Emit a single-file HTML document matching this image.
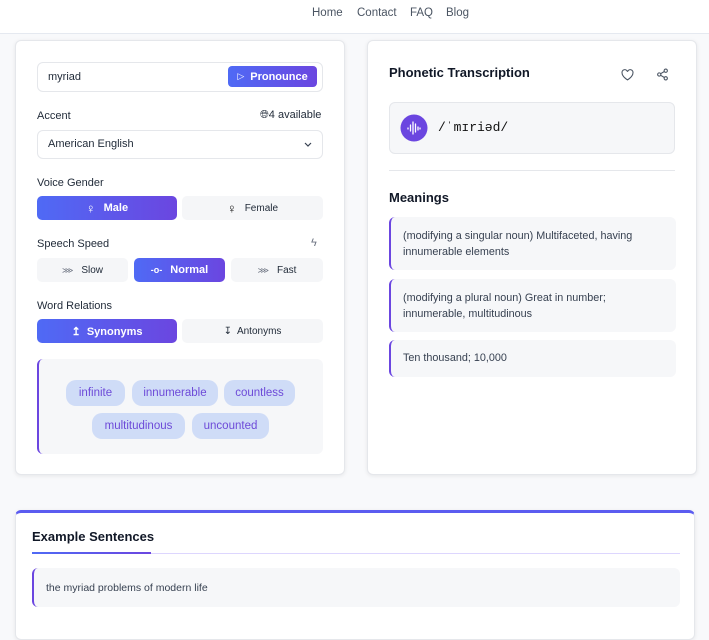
<!DOCTYPE html>
<html><head><meta charset="utf-8"><style>
*{box-sizing:border-box;margin:0;padding:0}
body{width:709px;height:621px;overflow:hidden;background:#f8f9fb;font-family:"Liberation Sans",sans-serif;color:#1f2937;position:relative}
.abs{position:absolute}
.hdr{left:0;top:0;width:709px;height:34px;background:#fff;border-bottom:1px solid #e5e9f0}
.nav{top:7px;font-size:11.5px;color:#4b5563}
.card{background:#fff;border:1px solid #e5e7eb;border-radius:6px;box-shadow:0 1px 4px rgba(0,0,0,.08)}
.lbl{font-size:11px;color:#1f2937}
.grad{background:linear-gradient(90deg,#4f6af5,#6b46e0);color:#fff}
.btn{border-radius:5px;font-size:10px;display:flex;align-items:center;justify-content:center;gap:8px}
.btn.off{background:#f5f6f8;color:#1f2937}
.btn.on{font-weight:bold;font-size:11px}
.chip{background:#cfdcf7;color:#6d4ad8;border-radius:10px;font-size:11.5px;display:flex;align-items:center;justify-content:center;height:26px}
.mean{background:#f6f7f9;border-left:2px solid #6b46e0;border-radius:6px;font-size:10.8px;line-height:16px;padding:11px 24px 11px 12px;color:#374151}
</style></head><body>
<div class="abs hdr"></div>
<div class="abs nav" style="left:312px">Home</div>
<div class="abs nav" style="left:357px">Contact</div>
<div class="abs nav" style="left:410px">FAQ</div>
<div class="abs nav" style="left:446px">Blog</div>

<div class="abs card" style="left:15px;top:40px;width:330px;height:435px"></div>
<div class="abs" style="left:37px;top:62px;width:286px;height:30px;border:1px solid #e5e7eb;border-radius:6px"></div>
<div class="abs" style="left:48px;top:71px;font-size:11px">myriad</div>
<div class="abs btn grad" style="left:228px;top:66px;width:89px;height:21px;border-radius:4px;font-size:11px;font-weight:bold;gap:6px"><span style="font-size:9px;font-weight:normal">▷</span>Pronounce</div>
<div class="abs lbl" style="left:37px;top:110px">Accent</div>
<div class="abs lbl" style="left:260px;top:109px">🌐︎4 available</div>
<div class="abs" style="left:37px;top:130px;width:286px;height:29px;border:1px solid #e5e7eb;border-radius:6px"></div>
<div class="abs" style="left:48px;top:138px;font-size:11px">American English</div>
<svg class="abs" style="left:304px;top:140px" width="8" height="8"><path d="M1 3l3 3 3-3" fill="none" stroke="#374151" stroke-width="1.2"/></svg>
<div class="abs lbl" style="left:37px;top:177px">Voice Gender</div>
<div class="abs btn grad on" style="left:37px;top:196px;width:140px;height:24px"><span style="font-size:13px;font-weight:normal">♀</span> Male</div>
<div class="abs btn off" style="left:182px;top:196px;width:141px;height:24px"><span style="font-size:13px;font-weight:bold;color:#111">♀</span> Female</div>
<div class="abs lbl" style="left:37px;top:238px">Speech Speed</div>
<div class="abs" style="left:311px;top:237px;font-size:11px;color:#6b7280">ϟ</div>
<div class="abs btn off" style="left:37px;top:258px;width:91px;height:24px"><span style="color:#6b7280;font-size:8px">⋙</span>Slow</div>
<div class="abs btn grad on" style="left:134px;top:258px;width:91px;height:24px"><span style="font-size:9px">-o-</span>Normal</div>
<div class="abs btn off" style="left:231px;top:258px;width:92px;height:24px"><span style="color:#6b7280;font-size:8px">⋙</span>Fast</div>
<div class="abs lbl" style="left:37px;top:300px">Word Relations</div>
<div class="abs btn grad on" style="left:37px;top:319px;width:140px;height:24px">↥&nbsp; Synonyms</div>
<div class="abs btn off" style="left:182px;top:319px;width:141px;height:24px">↧&nbsp; Antonyms</div>
<div class="abs" style="left:37px;top:359px;width:286px;height:95px;background:#f6f7f9;border-left:2px solid #6b46e0;border-radius:6px"></div>
<div class="abs chip" style="left:66px;top:380px;width:59px">infinite</div>
<div class="abs chip" style="left:132px;top:380px;width:86px">innumerable</div>
<div class="abs chip" style="left:224px;top:380px;width:71px">countless</div>
<div class="abs chip" style="left:92px;top:413px;width:93px">multitudinous</div>
<div class="abs chip" style="left:192px;top:413px;width:77px">uncounted</div>

<div class="abs card" style="left:367px;top:40px;width:330px;height:435px"></div>
<div class="abs" style="left:389px;top:65px;font-size:13px;font-weight:bold;color:#111827">Phonetic Transcription</div>
<svg class="abs" style="left:621px;top:69px" width="13" height="12" viewBox="0 0 24 22"><path d="M12 20S2 14 2 7.5A5 5 0 0 1 12 5a5 5 0 0 1 10 2.5C22 14 12 20 12 20z" fill="none" stroke="#4b5563" stroke-width="2"/></svg>
<svg class="abs" style="left:656px;top:68px" width="13" height="13" viewBox="0 0 24 24" fill="none" stroke="#4b5563" stroke-width="2"><circle cx="18" cy="5" r="3"/><circle cx="6" cy="12" r="3"/><circle cx="18" cy="19" r="3"/><path d="M8.6 13.5l6.8 4M15.4 6.5l-6.8 4"/></svg>
<div class="abs" style="left:389px;top:102px;width:286px;height:52px;background:#f6f7f9;border:1px solid #e5e7eb;border-radius:6px"></div>
<svg class="abs" style="left:400px;top:114px" width="28" height="28"><circle cx="14" cy="14" r="13.5" fill="#6b46e0"/><path d="M8 14v1M10.5 11v6M13 8v12M15.5 10v8M18 13v3M20 14v1" stroke="#fff" stroke-width="1.3" stroke-linecap="round"/></svg>
<div class="abs" style="left:438px;top:120px;font-family:'Liberation Mono','DejaVu Sans Mono',monospace;font-size:13px;color:#111">/ˈmɪriəd/</div>
<div class="abs" style="left:389px;top:170px;width:286px;height:1px;background:#e5e7eb"></div>
<div class="abs" style="left:389px;top:190px;font-size:13px;font-weight:bold;color:#111827">Meanings</div>
<div class="abs mean" style="left:389px;top:217px;width:287px;height:53px">(modifying a singular noun) Multifaceted, having innumerable elements</div>
<div class="abs mean" style="left:389px;top:279px;width:287px;height:53px">(modifying a plural noun) Great in number; innumerable, multitudinous</div>
<div class="abs mean" style="left:389px;top:340px;width:287px;height:37px;padding-top:10px">Ten thousand; 10,000</div>

<div class="abs card" style="left:15px;top:510px;width:680px;height:130px;border-top:3px solid #5b5cf0"></div>
<div class="abs" style="left:32px;top:529px;font-size:13px;font-weight:bold;color:#111827">Example Sentences</div>
<div class="abs" style="left:32px;top:553px;width:648px;height:1px;background:#ddd6fe"></div>
<div class="abs" style="left:32px;top:552px;width:119px;height:2px;background:linear-gradient(90deg,#4f6af5,#6b46e0)"></div>
<div class="abs mean" style="left:32px;top:568px;width:648px;height:39px;font-size:10.5px;padding-top:12px">the myriad problems of modern life</div>
</body></html>
